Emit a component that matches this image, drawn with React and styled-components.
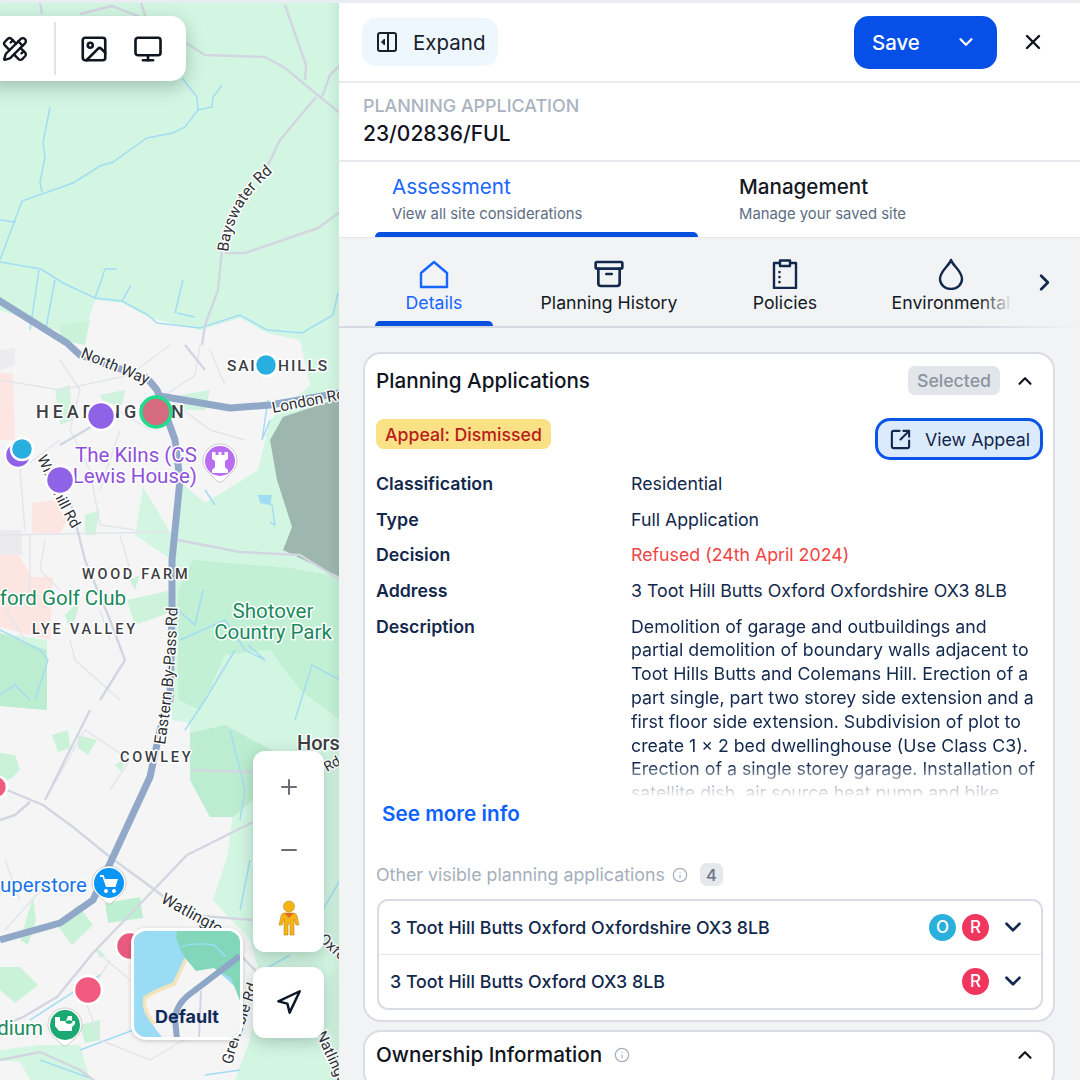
import styled, { createGlobalStyle } from "styled-components";
import {
  Archive,
  ChevronDown,
  ChevronRight,
  ChevronUp,
  Image,
  Info,
  Minus,
  Monitor,
  Navigation,
  PencilRuler,
  Plus,
  SquareArrowOutUpRight,
  X,
} from "lucide-react";

const GlobalStyle = createGlobalStyle`
  html, body {
    margin: 0;
    padding: 0;
    background: #fff;
  }
  body {
    font-family: Inter, "Liberation Sans", sans-serif;
    color: #10151f;
  }
  * { box-sizing: border-box; }
`;

const Page = styled.div`
  width: 1080px;
  height: 1080px;
  overflow: hidden;
  display: flex;
  border-top: 3px solid #e9ecf0;
`;

/* ---------- map ---------- */

const MapPane = styled.div`
  position: relative;
  width: 339px;
  flex: none;
  margin-top: -3px;
  height: 1080px;
  overflow: hidden;
  background: #d3f6e3;
  &::after {
    content: "";
    position: absolute;
    top: 0;
    right: 0;
    bottom: 0;
    width: 12px;
    background: linear-gradient(90deg, rgba(40, 70, 60, 0), rgba(40, 70, 60, 0.07));
  }
`;

const MapCanvas = styled.svg`
  display: block;
  font-family: Roboto, "Liberation Sans", sans-serif;
`;

const Toolbar = styled.div`
  position: absolute;
  z-index: 1;
  left: -15px;
  top: 16px;
  width: 201px;
  height: 65px;
  display: flex;
  align-items: center;
  padding-left: 3px;
  background: #fff;
  border-radius: 15px;
  box-shadow: 0 6px 18px rgba(40, 70, 60, 0.3);
  color: #10161f;
`;

const ToolIcon = styled.div`
  width: 54px;
  display: flex;
  justify-content: center;
  flex: none;
`;

const ToolDivider = styled.div`
  width: 2px;
  height: 53px;
  background: #dfe3e6;
  margin: 0 11px 0 12px;
  flex: none;
`;

const ZoomControl = styled.div`
  position: absolute;
  z-index: 1;
  left: 253px;
  top: 751px;
  width: 71px;
  height: 201px;
  background: #fff;
  border-radius: 12px;
  display: flex;
  flex-direction: column;
  align-items: center;
  justify-content: space-between;
  padding: 24px 0 16px;
  color: #6b6f75;
  box-shadow: 0 4px 16px rgba(40, 70, 60, 0.28);
`;

const ZoomGap = styled.div`
  height: 35px;
  display: flex;
  align-items: center;
`;

const LocateButton = styled.div`
  position: absolute;
  z-index: 1;
  left: 253px;
  top: 967px;
  width: 71px;
  height: 71px;
  background: #fff;
  border-radius: 12px;
  display: flex;
  align-items: center;
  justify-content: center;
  color: #0d1626;
  box-shadow: 0 4px 16px rgba(40, 70, 60, 0.28);
`;

const BaseMapCard = styled.div`
  position: absolute;
  z-index: 1;
  left: 131px;
  top: 928px;
  width: 112px;
  height: 112px;
  border: 3px solid #fff;
  border-radius: 15px;
  overflow: hidden;
  box-shadow: 0 1px 4px rgba(0, 0, 0, 0.2);
`;

const BaseMapLabel = styled.div`
  position: absolute;
  left: 0;
  right: 0;
  bottom: 10px;
  text-align: center;
  font-size: 18px;
  font-weight: 700;
  color: #0f2a5a;
`;

const water = [
  "M0 262 L41 269 L63 283 L95 298 L122 301 L148 315 L157 323 L200 328 L240 315 L267 330 L302 333 L333 315 L338 293",
  "M0 260 L22 201 L73 183 L100 166 L113 162 L147 138 L173 133 L185 127 L198 110 L212 107 L213 97 L222 85",
  "M198 110 L197 97 L182 78",
  "M42 192 L40 182 L45 157 L43 143 L50 107",
  "M0 220 L16 222",
  "M39 270 L30 330",
  "M55 280 L45 333",
  "M95 298 L105 269 L117 269",
  "M122 301 L131 285",
  "M175 313 L183 280",
  "M177 313 L195 317",
  "M0 630 L40 650 L48 660 L35 700",
  "M178 610 L195 625 L203 590",
  "M180 640 L225 620 L245 650 L265 660",
  "M235 650 L205 700 L185 730",
  "M265 660 L248 645",
  "M340 680 L312 665 L295 720",
  "M0 695 L15 685 L30 700",
  "M230 730 L245 790 L240 820",
  "M298 830 L300 850 L320 870",
  "M340 880 L320 915",
  "M250 860 L240 910",
  "M30 1020 L100 975",
  "M80 1050 L160 1020",
  "M40 1060 L90 1078",
  "M205 1075 L240 1070",
  "M255 975 L290 955",
  "M205 490 L215 505",
  "M258 495 L272 505 L275 525 L270 522",
  "M270 420 L262 440 L268 400",
];

const localRoads = [
  "M60 360 L80 390 L70 430 L90 470 L100 525 L135 530",
  "M0 380 L60 390 L130 375 L170 345",
  "M170 400 L210 430 L245 440",
  "M200 345 L195 375 L165 395",
  "M210 350 L225 385",
  "M0 535 L170 532",
  "M30 535 L30 600",
  "M45 540 L40 570 L60 590",
  "M120 535 L130 570",
  "M100 610 L110 640",
  "M0 600 L25 640",
  "M70 640 L75 660 L120 700",
  "M100 400 L150 430",
  "M60 440 L20 470 L25 530",
  "M120 430 L100 490",
  "M5 860 L20 900",
  "M45 800 L85 730 L130 760 L110 790",
  "M5 930 L50 880",
  "M95 950 L130 980 L170 1000",
  "M110 960 L85 1000 L100 1040 L150 1060 L200 1030",
  "M160 1010 L190 1040 L220 1030",
];

const mainRoads = [
  "M140 0 L146 18",
  "M186 43 L205 55 L265 57 L285 68 L320 97 L340 113",
  "M316 97 L280 140 L268 165",
  "M222 250 L218 290 L205 325 L202 345",
  "M225 253 L245 253 L318 228 L340 212",
  "M322 97 L330 75 L340 65",
  "M285 5 L306 65 L305 80",
  "M40 2 L42 14 M80 14 L112 6 L143 18",
  "M178 540 L240 552 L300 555 L340 580",
  "M120 410 L60 445",
  "M70 500 L85 560 L110 620 L125 660 L100 700",
  "M7 790 L43 805 L73 827 L110 857 L155 890 L200 925 L240 955 L260 975",
  "M90 710 L45 800",
  "M0 1027 L23 1017 L57 997 L93 953 L187 855 L253 822",
  "M193 770 L253 772",
  "M0 820 L15 815 L30 802",
  "M190 915 L253 920",
  "M0 1060 L40 1052 L80 1070 L100 1085",
  "M185 345 L205 370",
];

function Pin({ x, y, r, fill }) {
  return <circle cx={x} cy={y} r={r} fill={fill} stroke="#fff" strokeWidth="2.5" />;
}

function TearPin({ x, y, fill, children }) {
  return (
    <g transform={`translate(${x} ${y})`}>
      <path
        d="M-17 0 A17 17 0 1 1 17 0 C17 9 9 13 4 19 Q0 23 -4 19 C-9 13 -17 9 -17 0 Z"
        fill="#fff"
        stroke="rgba(0,0,0,.18)"
        strokeWidth="1"
      />
      <circle r="15" fill={fill} />
      {children}
    </g>
  );
}

function Label({ x, y, size = 14, fill = "#3c4043", weight = 500, spacing = 0, anchor = "start", children }) {
  return (
    <text
      x={x}
      y={y}
      fontSize={size}
      fontWeight={weight}
      fill={fill}
      letterSpacing={spacing}
      textAnchor={anchor}
      stroke="#fff"
      strokeWidth="3"
      strokeLinejoin="round"
      paintOrder="stroke"
    >
      {children}
    </text>
  );
}

function RoadLabel({ id, d, size = 15.5, children }) {
  return (
    <>
      <path id={id} d={d} fill="none" />
      <text
        fontSize={size}
        fill="#2d3136"
        stroke="#fff"
        strokeWidth="3"
        strokeLinejoin="round"
        paintOrder="stroke"
      >
        <textPath href={`#${id}`}>{children}</textPath>
      </text>
    </>
  );
}

function MapArt() {
  return (
    <MapCanvas width="339" height="1080" viewBox="0 0 339 1080">
      <rect width="339" height="1080" fill="#d3f6e3" />

      {/* built up area */}
      <path
        d="M82 340 L95 300 L122 303 L150 318 L200 330 L240 318 L267 333 L300 340 L310 385 L270 420 L258 470 L205 503 L178 480 L172 535 L143 487 L135 535 L172 560 L172 720 L190 723 L190 780 L210 817 L233 813 L227 857 L213 900 L250 940 L260 975 L250 1040 L235 1080 L90 1080 L80 1045 L40 1045 L0 1050 L0 706 L47 710 L47 640 L0 633 L0 310 Z"
        fill="#f5f5f6"
      />
      <path d="M0 1080 L0 1060 L20 1062 L30 1080 Z" fill="#f5f5f6" />

      {/* green patches */}
      <path d="M193 560 L290 568 L340 577 L340 720 L300 690 L270 650 L225 655 L200 710 L178 700 L178 590 Z" fill="#c2f0d5" />
      <path d="M190 733 L225 725 L290 760 L253 800 L233 817 L210 817 L190 780 Z" fill="#bdedd0" />
      <path d="M0 633 L47 650 L47 710 L0 706 Z" fill="#bdedd0" />
      <path d="M127 600 L172 590 L172 612 L135 625 Z" fill="#cdf3dd" />
      <path d="M60 325 L90 320 L85 345 L60 340 Z" fill="#c9f2d9" />
      <path d="M55 390 L70 385 L72 420 L60 425 Z" fill="#d0f3df" />
      <path d="M100 395 L125 390 L122 405 L105 405 Z" fill="#d0f3df" />
      <path d="M180 395 L210 390 L205 410 L185 410 Z" fill="#d0f3df" />
      <path d="M85 515 L100 510 L95 535 L85 535 Z" fill="#d0f3df" />
      <path d="M130 580 L140 575 L135 590 Z" fill="#c9f2d9" />
      <path d="M65 615 L80 600 L75 620 L68 625 Z" fill="#c9f2d9" />
      <path d="M0 753 L15 755 L20 770 L12 778 L0 782 Z" fill="#c9f2d9" />
      <path d="M52 735 L68 730 L70 748 L58 752 Z" fill="#c9f2d9" />
      <path d="M78 735 L97 740 L88 755 L78 748 Z" fill="#c9f2d9" />
      <path d="M115 765 L125 758 L122 772 Z" fill="#c9f2d9" />
      <path d="M20 940 L33 897 L36 920 L28 945 Z" fill="#c9f2d9" />
      <path d="M57 925 L78 905 L93 925 L72 945 Z" fill="#c9f2d9" />
      <path d="M105 903 L140 897 L143 918 L108 923 Z" fill="#bfefd2" />
      <path d="M95 947 L105 955 L100 958 Z" fill="#c9f2d9" />
      <path d="M0 967 L20 967 L38 985 L15 1003 L0 990 Z" fill="#c9f2d9" />
      <path d="M80 1025 L100 1020 L100 1040 L85 1043 Z" fill="#c9f2d9" />

      {/* pink residential */}
      <path d="M0 373 L13 373 L15 440 L0 440 Z" fill="#fde6e2" />
      <path d="M32 503 L55 500 L67 520 L60 533 L32 533 Z" fill="#fde6e2" />
      <path d="M0 553 L17 553 L32 577 L53 577 L50 640 L0 627 Z" fill="#fde6e2" />
      <path d="M0 350 L15 348 L15 365 L0 370 Z" fill="#ececee" />
      <path d="M0 530 L22 530 L22 555 L0 555 Z" fill="#ebebed" />

      {/* forest block */}
      <path d="M340 398 L283 417 L270 440 L277 480 L292 527 L283 550 L340 577 Z" fill="#9db7af" />
      <path d="M258 495 L272 495 L270 505 L260 503 Z" fill="#9fddf2" />

      {water.map((d) => (
        <path key={d} d={d} fill="none" stroke="#a3dcf3" strokeWidth="1.5" />
      ))}
      {localRoads.map((d) => (
        <path key={d} d={d} fill="none" stroke="#e2e5ea" strokeWidth="1.4" />
      ))}
      {mainRoads.map((d) => (
        <path key={d} d={d} fill="none" stroke="#d2d6e0" strokeWidth="2.4" strokeLinejoin="round" />
      ))}

      {/* trunk roads */}
      <g fill="none" stroke="#91a8c9" strokeWidth="7" strokeLinejoin="round">
        <path d="M-5 298 L67 343 L80 355 L147 378 L157 390 L175 440 L180 480 L172 560 L172 610 L170 700 L160 730 L150 777 L113 857 L93 900 L60 923 L0 940" />
        <path d="M160 396 L230 408 L270 405 L340 393" />
      </g>

      <RoadLabel id="bayswater" d="M228 252 C232 215 250 190 278 168">Bayswater Rd</RoadLabel>
      <RoadLabel id="northway" d="M80 357 L150 386">North Way</RoadLabel>
      <RoadLabel id="londonrd" d="M273 413 L345 399">London Rd</RoadLabel>
      <RoadLabel id="windmill" d="M37 458 C47 480 60 510 77 537" size={15}>Windmill Rd</RoadLabel>
      <RoadLabel id="bypass" d="M165 745 C172 700 177 650 178 590" size={16}>Eastern By-Pass Rd</RoadLabel>
      <RoadLabel id="watling" d="M160 902 L225 938" size={16}>Watlington Rd</RoadLabel>
      <RoadLabel id="grenoble" d="M232 1065 C238 1040 248 1015 258 985">Grenoble Rd</RoadLabel>
      <RoadLabel id="oxfordrd" d="M318 940 L345 965" size={15}>Oxford</RoadLabel>
      <RoadLabel id="natlington" d="M316 1034 L338 1082" size={15}>Natlington</RoadLabel>
      <RoadLabel id="horspath" d="M327 772 L345 762" size={14}>Rd</RoadLabel>

      <Label x={227} y={371} size={15.5} spacing={1.8}>SAI</Label>
      <Label x={278} y={371} size={15.5} spacing={1.9}>HILLS</Label>
      <Label x={36} y={418} size={18} spacing={3.9}>HEADINGTON</Label>
      <Label x={82} y={579} size={14.5} spacing={2.7}>WOOD FARM</Label>
      <Label x={32} y={634} size={14.5} spacing={2.8}>LYE VALLEY</Label>
      <Label x={120} y={762} size={14.5} spacing={2.7}>COWLEY</Label>
      <Label x={297} y={750} size={20} weight={500}>Horspath</Label>

      <Label x={75} y={462} size={20.5} fill="#8e4fdb" weight={400}>The Kilns (CS</Label>
      <Label x={197} y={483} size={20.5} fill="#8e4fdb" weight={400} anchor="end">Lewis House)</Label>
      <Label x={126} y={605} size={20.5} fill="#188a5c" weight={400} anchor="end">Oxford Golf Club</Label>
      <Label x={273} y={618} size={20.5} fill="#188a5c" weight={400} anchor="middle">Shotover</Label>
      <Label x={273} y={639} size={20.5} fill="#188a5c" weight={400} anchor="middle">Country Park</Label>
      <Label x={87} y={892} size={20.5} fill="#1a73e8" weight={400} anchor="end">Superstore</Label>
      <Label x={43} y={1035} size={20.5} fill="#188a5c" weight={400} anchor="end">Stadium</Label>

      <Pin x={266} y={365} r={11} fill="#29aee0" />
      <Pin x={101} y={416} r={14} fill="#9062e8" />
      <circle cx={156} cy={412} r={15} fill="#d56b7e" stroke="#21dc8d" strokeWidth="3.5" />
      <Pin x={18} y={455} r={13} fill="#9062e8" />
      <Pin x={22} y={449} r={11} fill="#29aee0" />
      <Pin x={60} y={480} r={14} fill="#9062e8" />
      <Pin x={-4} y={787} r={11} fill="#f25a80" />
      <Pin x={88} y={990} r={14} fill="#f25a80" />
      <Pin x={130} y={946} r={14} fill="#e95a80" />

      <TearPin x={220} y={461} fill="#b96ef2">
        <path
          d="M-8 -9 h3.5 v3 h3 v-3 h3 v3 h3 v-3 h3.5 v7 l-3 2 v6 l3 3 v3 h-16 v-3 l3 -3 v-6 l-3 -2 Z"
          fill="#fff"
        />
      </TearPin>
      <TearPin x={109} y={883} fill="#0b95f6">
        <path d="M-9 -8 h3.5 l1.5 4 h13 l-2.5 8 h-9.5 l-3.5 -10 h-2.5 Z" fill="#fff" />
        <circle cx={-3} cy={8} r={2} fill="#fff" />
        <circle cx={5} cy={8} r={2} fill="#fff" />
      </TearPin>
      <TearPin x={65} y={1025} fill="#1aa873">
        <path d="M-10 -8 h5 v4 h6 l2 -5 h4 v5 h3 v3 l-3 3 v4 h-13 l-4 -5 Z" fill="#fff" />
        <ellipse cx={4} cy={-3} rx={3.5} ry={1.8} fill="#1aa873" />
      </TearPin>
    </MapCanvas>
  );
}

function BaseMapThumb() {
  return (
    <svg width="106" height="106" viewBox="0 0 106 106">
      <rect width="106" height="106" fill="#9bdcf5" />
      <path d="M52 28 L40 53 L10 67 L10 80 L23 100 L30 108 L106 108 L106 60 L80 37 Z" fill="#f5f5f6" />
      <path d="M52 28 L40 53 Q20 60 11 67 Q8 78 20 93" fill="none" stroke="#f3e3bb" strokeWidth="3.5" />
      <path d="M43 0 L106 0 L106 70 L97 47 L80 37 L62 40 L52 28 L47 20 L42 7 Z" fill="#82d6ba" />
      <path d="M47 16 Q60 11 80 14 L92 26" fill="none" stroke="#9bdcf5" strokeWidth="1.5" />
      <path d="M43 108 L41 88 Q42 72 60 60 L106 25" fill="none" stroke="#8fa6c7" strokeWidth="6" />
      <path d="M67 60 L65 106" fill="none" stroke="#cfd6e2" strokeWidth="2" />
    </svg>
  );
}

function Pegman() {
  return (
    <svg width="22" height="36" viewBox="0 0 22 36">
      <circle cx="11" cy="6.5" r="5.5" fill="#f5b316" stroke="#b98a1e" strokeWidth=".6" />
      <path
        d="M6 13 h10 q2 0 3 3 l2 9 h-3 l-2 -6 v16 h-4 v-11 h-2 v11 h-4 v-16 l-2 6 h-3 l2 -9 q1 -3 3 -3 Z"
        fill="#f5b316"
        stroke="#b98a1e"
        strokeWidth=".6"
      />
      <path d="M6.5 13 L11 18 L15.5 13 Z" fill="#dd6a1d" />
    </svg>
  );
}

/* ---------- panel ---------- */

const Panel = styled.div`
  flex: 1;
  min-width: 0;
  height: 1077px;
  display: flex;
  flex-direction: column;
  overflow: hidden;
  background: #f1f3f5;
`;

const Header = styled.div`
  height: 80px;
  flex: none;
  display: flex;
  align-items: center;
  justify-content: space-between;
  padding: 0 35px 0 23px;
  background: #fff;
  border-bottom: 2px solid #e8ebee;
`;

const ExpandButton = styled.div`
  width: 136px;
  height: 48px;
  display: flex;
  align-items: center;
  gap: 15px;
  padding-left: 14px;
  background: #eef7fe;
  border-radius: 14px;
  font-size: 20.5px;
  color: #18202c;
`;

const HeaderActions = styled.div`
  display: flex;
  align-items: center;
  gap: 24px;
`;

const SaveButton = styled.div`
  width: 143px;
  height: 53px;
  display: flex;
  align-items: center;
  justify-content: space-between;
  padding: 0 20px 0 18px;
  background: #0650e8;
  border-radius: 15px;
  color: #fff;
  font-size: 20.4px;
  font-weight: 500;
`;

const CaseInfo = styled.div`
  height: 79px;
  flex: none;
  padding: 12px 24px 0;
  background: #fff;
  border-bottom: 2px solid #e8ebee;
`;

const Overline = styled.div`
  font-size: 17.9px;
  font-weight: 500;
  line-height: 22px;
  color: #aab3c0;
`;

const CaseRef = styled.div`
  font-size: 21px;
  font-weight: 500;
  line-height: 28px;
  margin-top: 3px;
  color: #10151f;
`;

const MainTabs = styled.div`
  height: 76px;
  flex: none;
  display: flex;
  padding-left: 36px;
  background: #fff;
  border-bottom: 1px solid #e4e7ea;
`;

const MainTab = styled.div`
  position: relative;
  width: ${(p) => p.$width}px;
  padding: 12px 0 0 ${(p) => p.$inset}px;
  &::after {
    content: "";
    display: ${(p) => (p.$active ? "block" : "none")};
    position: absolute;
    left: 0;
    right: 0;
    bottom: 0;
    height: 5px;
    border-radius: 5px 5px 0 0;
    background: #0650e0;
  }
`;

const MainTabTitle = styled.div`
  font-size: 20.6px;
  line-height: 26px;
  font-weight: ${(p) => (p.$active ? 400 : 500)};
  color: ${(p) => (p.$active ? "#1766ff" : "#141a24")};
`;

const MainTabSub = styled.div`
  font-size: 14.85px;
  line-height: 20px;
  margin-top: 4px;
  color: #5e6d82;
`;

const SubNav = styled.div`
  position: relative;
  height: 90px;
  flex: none;
  display: flex;
  padding-left: 36px;
  border-bottom: 2px solid;
  border-image: linear-gradient(90deg, #d5d9e0 85%, rgba(213, 217, 224, 0) 100%) 1;
`;

const SubTab = styled.div`
  position: relative;
  width: ${(p) => p.$width}px;
  flex: none;
  display: flex;
  flex-direction: column;
  align-items: center;
  padding-top: 20px;
  color: ${(p) => (p.$active ? "#1766ff" : "#12284c")};
  &::after {
    content: "";
    display: ${(p) => (p.$active ? "block" : "none")};
    position: absolute;
    left: 0;
    right: 0;
    bottom: 0;
    height: 5px;
    border-radius: 5px 5px 0 0;
    background: #0650e0;
  }
`;

const SubTabIcon = styled.div`
  height: 32px;
  display: flex;
  align-items: center;
`;

const SubTabLabel = styled.div`
  margin-top: 2px;
  font-size: 17.7px;
  line-height: 22px;
  white-space: nowrap;
  color: ${(p) => (p.$active ? "#1766ff" : "#141a24")};
`;

const FadeEdge = styled.div`
  position: absolute;
  left: 640px;
  top: 0;
  width: 34px;
  height: 88px;
  background: linear-gradient(90deg, rgba(241, 243, 245, 0), #f1f3f5);
`;

const SubNavNext = styled.div`
  position: absolute;
  left: 692px;
  top: 31px;
  color: #12284c;
`;

const Body = styled.div`
  flex: 1;
  min-height: 0;
  padding: 24px 25px 0 24px;
  display: flex;
  flex-direction: column;
  gap: 8px;
`;

const Card = styled.div`
  flex: none;
  background: #fff;
  border: 2px solid #d9dde3;
  border-radius: 18px;
  padding: 0 11px 10px 11px;
`;

const CardHead = styled.div`
  height: ${(p) => (p.$compact ? 46 : 53)}px;
  display: flex;
  align-items: center;
  justify-content: space-between;
`;

const CardTitle = styled.div`
  display: flex;
  align-items: center;
  font-size: 20.7px;
  font-weight: 500;
  color: #10151f;
`;

const CardTools = styled.div`
  display: flex;
  align-items: center;
  gap: 14px;
  padding-right: 6px;
  color: #10151f;
`;

const SelectedBadge = styled.div`
  height: 29px;
  padding: 0 9px;
  display: flex;
  align-items: center;
  border-radius: 7px;
  background: #e2e5e9;
  color: #8b94a0;
  font-size: 17.7px;
  font-weight: 500;
`;

const StatusRow = styled.div`
  height: 53px;
  margin-top: 12px;
  margin-right: -1px;
  display: flex;
  justify-content: space-between;
  align-items: flex-start;
`;

const AppealBadge = styled.div`
  height: 30px;
  padding: 0 9px;
  display: flex;
  align-items: center;
  border-radius: 8px;
  background: #fae185;
  color: #b91c1c;
  font-size: 17.7px;
  font-weight: 500;
`;

const ViewAppeal = styled.div`
  width: 168px;
  height: 42px;
  margin-top: -1px;
  display: flex;
  align-items: center;
  gap: 13px;
  padding-left: 11px;
  border: 3px solid #0a55e8;
  border-radius: 15px;
  background: #dbebfd;
  font-size: 17.8px;
  color: #12284c;
`;

const Details = styled.dl`
  margin: 0;
  display: grid;
  grid-template-columns: 255px 1fr;
  grid-auto-rows: minmax(35.65px, auto);
  font-size: 17.75px;
  line-height: 23.8px;
  color: #12284c;
  dt { font-weight: 600; }
  dd { margin: 0; }
`;

const Decision = styled.dd`
  && { color: #ef4444; }
`;

const ClampedText = styled.dd`
  height: 181px;
  overflow: hidden;
  padding-right: 4px;
  -webkit-mask-image: linear-gradient(180deg, #000 82%, rgba(0, 0, 0, 0.6) 88%, rgba(0, 0, 0, 0.08) 100%);
  mask-image: linear-gradient(180deg, #000 82%, rgba(0, 0, 0, 0.6) 88%, rgba(0, 0, 0, 0.08) 100%);
`;

const SeeMore = styled.div`
  margin: 3px 0 0 6px;
  font-size: 20.7px;
  line-height: 30px;
  font-weight: 600;
  color: #0d62ff;
`;

const OtherHead = styled.div`
  margin-top: 33px;
  height: 26px;
  display: flex;
  align-items: center;
  font-size: 17.8px;
  color: #a5aebb;
`;

const CountBadge = styled.div`
  width: 23px;
  height: 23px;
  margin-left: 12px;
  display: flex;
  align-items: center;
  justify-content: center;
  border-radius: 7px;
  background: #e5e8ec;
  color: #6c7583;
  font-size: 16.5px;
  font-weight: 500;
`;

const InfoGlyph = styled(Info)`
  margin-left: ${(p) => p.$gap}px;
  color: #a5aebb;
`;

const AddressList = styled.div`
  margin: 11px -1px 0 1px;
  border: 2px solid #d9dde3;
  border-radius: 11px;
  overflow: hidden;
`;

const AddressRow = styled.div`
  height: 53px;
  display: flex;
  align-items: center;
  padding: 0 15px 0 11px;
  font-size: 17.8px;
  font-weight: 500;
  color: #12284c;
  & + & { border-top: 1px solid #e3e6ea; height: 54px; }
`;

const AddressText = styled.div`
  flex: 1;
`;

const Marker = styled.div`
  width: 27px;
  height: 27px;
  margin-left: 6px;
  border-radius: 50%;
  display: flex;
  align-items: center;
  justify-content: center;
  background: ${(p) => p.$color};
  color: #fff;
  font-size: 17px;
  font-weight: 500;
`;

const RowChevron = styled(ChevronDown)`
  margin-left: 11px;
  color: #12284c;
`;

function ExpandIcon() {
  return (
    <svg width="22" height="22" viewBox="0 0 22 22" fill="none" stroke="#18202c" strokeWidth="2">
      <rect x="2" y="2" width="18" height="18" rx="2" />
      <path d="M12 2 V20" />
      <path d="M8.5 8 L5.5 11 L8.5 14 Z" fill="#18202c" strokeWidth="1" />
    </svg>
  );
}

function HomeIcon() {
  return (
    <svg width="32" height="30" viewBox="0 0 32 30" fill="none" stroke="currentColor" strokeWidth="2.4" strokeLinejoin="round">
      <path d="M16 3 L29 14 V28 H3 V14 Z" />
    </svg>
  );
}

function ClipboardIcon() {
  return (
    <svg width="30" height="30" viewBox="0 0 30 30" fill="none" stroke="currentColor" strokeWidth="2.4" strokeLinejoin="round">
      <path d="M10 4 H4 V29 H26 V4 H20" />
      <rect x="10" y="1.5" width="10" height="5.5" />
      <path d="M9.5 13 v.1 M9.5 18 v.1 M9.5 23 v.1" strokeLinecap="round" strokeWidth="2.6" />
    </svg>
  );
}

function DropIcon() {
  return (
    <svg width="28" height="32" viewBox="0 0 28 32" fill="none" stroke="currentColor" strokeWidth="2.4" strokeLinejoin="round">
      <path d="M14 2 C16 8 25 13 25 21 A11 10 0 0 1 3 21 C3 13 12 8 14 2 Z" />
    </svg>
  );
}

export default function App() {
  return (
    <>
      <GlobalStyle />
      <Page>
        <MapPane>
          <MapArt />
          <Toolbar>
            <ToolIcon>
              <PencilRuler size={26} strokeWidth={2.2} />
            </ToolIcon>
            <ToolDivider />
            <ToolIcon>
              <Image size={30} strokeWidth={2.1} />
            </ToolIcon>
            <ToolIcon>
              <Monitor size={30} strokeWidth={2.1} />
            </ToolIcon>
          </Toolbar>
          <ZoomControl>
            <Plus size={24} strokeWidth={2} />
            <ZoomGap>
              <Minus size={24} strokeWidth={2} />
            </ZoomGap>
            <Pegman />
          </ZoomControl>
          <LocateButton>
            <Navigation size={27} strokeWidth={2.2} />
          </LocateButton>
          <BaseMapCard>
            <BaseMapThumb />
            <BaseMapLabel>Default</BaseMapLabel>
          </BaseMapCard>
        </MapPane>

        <Panel>
          <Header>
            <ExpandButton>
              <ExpandIcon />
              Expand
            </ExpandButton>
            <HeaderActions>
              <SaveButton>
                Save
                <ChevronDown size={22} strokeWidth={2.4} />
              </SaveButton>
              <X size={24} strokeWidth={2.4} />
            </HeaderActions>
          </Header>

          <CaseInfo>
            <Overline>PLANNING APPLICATION</Overline>
            <CaseRef>23/02836/FUL</CaseRef>
          </CaseInfo>

          <MainTabs>
            <MainTab $active $width={323} $inset={17}>
              <MainTabTitle $active>Assessment</MainTabTitle>
              <MainTabSub>View all site considerations</MainTabSub>
            </MainTab>
            <MainTab $width={340} $inset={41}>
              <MainTabTitle>Management</MainTabTitle>
              <MainTabSub>Manage your saved site</MainTabSub>
            </MainTab>
          </MainTabs>

          <SubNav>
            <SubTab $active $width={118}>
              <SubTabIcon>
                <HomeIcon />
              </SubTabIcon>
              <SubTabLabel $active>Details</SubTabLabel>
            </SubTab>
            <SubTab $width={232}>
              <SubTabIcon>
                <Archive size={32} strokeWidth={2} />
              </SubTabIcon>
              <SubTabLabel>Planning History</SubTabLabel>
            </SubTab>
            <SubTab $width={120}>
              <SubTabIcon>
                <ClipboardIcon />
              </SubTabIcon>
              <SubTabLabel>Policies</SubTabLabel>
            </SubTab>
            <SubTab $width={212}>
              <SubTabIcon>
                <DropIcon />
              </SubTabIcon>
              <SubTabLabel>Environmental</SubTabLabel>
            </SubTab>
            <FadeEdge />
            <SubNavNext>
              <ChevronRight size={27} strokeWidth={2.4} />
            </SubNavNext>
          </SubNav>

          <Body>
            <Card>
              <CardHead>
                <CardTitle>Planning Applications</CardTitle>
                <CardTools>
                  <SelectedBadge>Selected</SelectedBadge>
                  <ChevronUp size={22} strokeWidth={2.4} />
                </CardTools>
              </CardHead>
              <StatusRow>
                <AppealBadge>Appeal: Dismissed</AppealBadge>
                <ViewAppeal>
                  <SquareArrowOutUpRight size={23} strokeWidth={2.2} />
                  View Appeal
                </ViewAppeal>
              </StatusRow>
              <Details>
                <dt>Classification</dt>
                <dd>Residential</dd>
                <dt>Type</dt>
                <dd>Full Application</dd>
                <dt>Decision</dt>
                <Decision>Refused (24th April 2024)</Decision>
                <dt>Address</dt>
                <dd>3 Toot Hill Butts Oxford Oxfordshire OX3 8LB</dd>
                <dt>Description</dt>
                <ClampedText>
                  Demolition of garage and outbuildings and partial demolition of boundary walls adjacent to Toot
                  Hills Butts and Colemans Hill. Erection of a part single, part two storey side extension and a
                  first floor side extension. Subdivision of plot to create 1 x 2 bed dwellinghouse (Use Class C3).
                  Erection of a single storey garage. Installation of satellite dish, air source heat pump and bike
                  store.
                </ClampedText>
              </Details>
              <SeeMore>See more info</SeeMore>
              <OtherHead>
                Other visible planning applications
                <InfoGlyph $gap={7} size={16} strokeWidth={1.8} />
                <CountBadge>4</CountBadge>
              </OtherHead>
              <AddressList>
                <AddressRow>
                  <AddressText>3 Toot Hill Butts Oxford Oxfordshire OX3 8LB</AddressText>
                  <Marker $color="#2bb0dd">O</Marker>
                  <Marker $color="#f0355f">R</Marker>
                  <RowChevron size={26} strokeWidth={2.4} />
                </AddressRow>
                <AddressRow>
                  <AddressText>3 Toot Hill Butts Oxford OX3 8LB</AddressText>
                  <Marker $color="#f0355f">R</Marker>
                  <RowChevron size={26} strokeWidth={2.4} />
                </AddressRow>
              </AddressList>
            </Card>
            <Card>
              <CardHead $compact>
                <CardTitle>
                  Ownership Information
                  <InfoGlyph $gap={12} size={16} strokeWidth={1.8} />
                </CardTitle>
                <CardTools>
                  <ChevronUp size={22} strokeWidth={2.4} />
                </CardTools>
              </CardHead>
            </Card>
          </Body>
        </Panel>
      </Page>
    </>
  );
}
